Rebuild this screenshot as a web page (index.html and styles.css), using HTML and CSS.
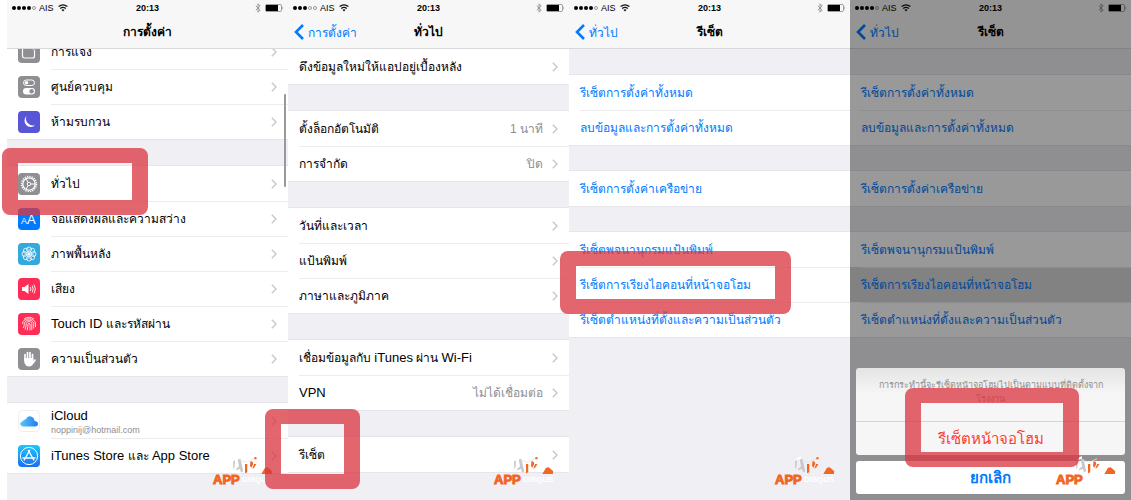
FILE: index.html
```
<!DOCTYPE html>
<html lang="th">
<head>
  <meta charset="UTF-8">
  <meta name="viewport" content="width=device-width, initial-scale=1.0">
  <title>รีเซ็ตหน้าจอโฮม</title>
  <link rel="stylesheet" href="styles.css">
</head>
<body>
  <!-- shared shapes -->
  <svg class="sprite" width="0" height="0" aria-hidden="true">
    <symbol id="wifi" viewBox="0 0 10 8">
      <path d="M0.6 2.6 Q5 -1 9.4 2.6 M2.2 4.5 Q5 2.3 7.8 4.5" fill="none" stroke="#111" stroke-width="1.3"/>
      <path d="M3.4 5.8 Q5 4.6 6.6 5.8 L5 7.6 Z" fill="#111"/>
    </symbol>
    <symbol id="bluetooth" viewBox="0 0 6 10">
      <path d="M0.8 2.8 L5.2 7 L3 9.2 V0.8 L5.2 3 L0.8 7.2" fill="none" stroke="#8e8e93" stroke-width="0.9"/>
    </symbol>
    <symbol id="battery" viewBox="0 0 19 8">
      <rect x="0.5" y="0.5" width="16" height="7" rx="1.3" fill="none" stroke="#777" stroke-width="0.7"/>
      <rect x="1" y="1" width="12" height="6" fill="#000"/>
      <path d="M17.5 2.6 Q19 4 17.5 5.4 Z" fill="#777"/>
    </symbol>
    <symbol id="next" viewBox="0 0 6 10">
      <path d="M0.8 0.8 L5 5 L0.8 9.2" fill="none" stroke="#c7c7cc" stroke-width="1.4"/>
    </symbol>
    <symbol id="back" viewBox="0 0 10 16">
      <path d="M9 1 L2 8 L9 15" fill="none" stroke="#007aff" stroke-width="2.6"/>
    </symbol>
    <symbol id="logo" viewBox="0 0 64 22">
      <path d="M19 7 L21 6 L20.500 13 L19 16 Z M24 5 L27 4 L30 18 L27.500 19 L26.500 15 L22 17 L22.500 15 L25.500 12.500 Z" fill="#c8c8c8"/>
      <path d="M20 4 L25 1 L25.500 4 L21 5.500 Z" fill="#fff"/>
      <path d="M26 6 L34 8 L44 3" fill="none" stroke="#e4e4e4" stroke-width="0.9"/>
      <path d="M32 10 L34.500 10 L34.500 19 L32 20 Z M38 7 Q41 6.500 41 10 L39 14 L37.500 12 Z M42 10 L44.500 10 L42 14 L40 15 Z" fill="#f26522"/>
      <circle cx="43.500" cy="3.500" r="1.300" fill="#f26522"/>
      <path d="M50 21 L54 14 L57 13.500 L62 18 L61.500 21 Z" fill="#f26522"/>
    </symbol>
  </svg>

  <main class="steps">
    <section class="phone">
      <header class="bar">
        <div class="status">
          <span class="signal"><i></i><i></i><i></i><i></i><i class="off"></i></span>
          <span class="carrier">AIS</span>
          <svg class="wifi"><use href="#wifi"/></svg>
          <span class="time">20:13</span>
          <svg class="bluetooth"><use href="#bluetooth"/></svg>
          <svg class="battery"><use href="#battery"/></svg>
        </div>
        <div class="nav"><h2>การตั้งค่า</h2></div>
      </header>
      <div class="list scrolled">
        <div class="group with-icons">
          <a class="row" href="#">
            <svg class="icon" viewBox="0 0 22 22"><rect width="22" height="22" rx="4" fill="#8e8e93"/><rect x="4.500" y="5" width="12" height="12" rx="2" fill="none" stroke="#fff" stroke-width="1.200"/><circle cx="15.500" cy="6" r="3" fill="#fff" stroke="#8e8e93"/></svg>
            <span class="label">การแจ้ง</span><svg class="next"><use href="#next"/></svg>
          </a>
          <a class="row" href="#">
            <svg class="icon" viewBox="0 0 22 22"><rect width="22" height="22" rx="4" fill="#8e8e93"/><rect x="5.500" y="4" width="11" height="5.500" rx="2.750" fill="none" stroke="#fff"/><circle cx="8.500" cy="6.750" r="1.800" fill="#fff"/><rect x="5" y="12" width="12" height="6.500" rx="3.250" fill="#fff"/><circle cx="13.600" cy="15.250" r="2.200" fill="#8e8e93"/></svg>
            <span class="label">ศูนย์ควบคุม</span><svg class="next"><use href="#next"/></svg>
          </a>
          <a class="row" href="#">
            <svg class="icon" viewBox="0 0 22 22"><rect width="22" height="22" rx="4" fill="#5856d6"/><path d="M8.500 5 A6.300 6.300 0 1 0 17.200 14.200 A7 7 0 0 1 8.500 5 Z" fill="#fff"/></svg>
            <span class="label">ห้ามรบกวน</span><svg class="next"><use href="#next"/></svg>
          </a>
        </div>
        <div class="group with-icons">
          <a class="row" href="#">
            <svg class="icon" viewBox="0 0 22 22"><rect width="22" height="22" rx="4" fill="#8e8e93"/><circle cx="11" cy="11" r="7.500" fill="none" stroke="#fff" stroke-width="1.400" stroke-dasharray="1.300 1.060"/><circle cx="11" cy="11" r="6.200" fill="none" stroke="#fff" stroke-width="1.300"/><path d="M11 11 H17 M11 11 L8 5.800 M11 11 L8 16.200" stroke="#fff"/><circle cx="11" cy="11" r="1.700" fill="#8e8e93" stroke="#fff" stroke-width="0.900"/></svg>
            <span class="label">ทั่วไป</span><svg class="next"><use href="#next"/></svg>
          </a>
          <a class="row" href="#">
            <svg class="icon" viewBox="0 0 22 22"><rect width="22" height="22" rx="4" fill="#007aff"/><text x="3" y="16" class="aa-small">A</text><text x="9" y="16" class="aa-big">A</text></svg>
            <span class="label">จอแสดงผลและความสว่าง</span><svg class="next"><use href="#next"/></svg>
          </a>
          <a class="row" href="#">
            <svg class="icon" viewBox="0 0 22 22"><rect width="22" height="22" rx="4" fill="#34aadc"/><g fill="none" stroke="#fff" stroke-width="0.800"><circle cx="11" cy="6.500" r="2.500"/><circle cx="14.200" cy="7.800" r="2.500"/><circle cx="15.500" cy="11" r="2.500"/><circle cx="14.200" cy="14.200" r="2.500"/><circle cx="11" cy="15.500" r="2.500"/><circle cx="7.800" cy="14.200" r="2.500"/><circle cx="6.500" cy="11" r="2.500"/><circle cx="7.800" cy="7.800" r="2.500"/></g><circle cx="11" cy="11" r="1.600" fill="#fff"/></svg>
            <span class="label">ภาพพื้นหลัง</span><svg class="next"><use href="#next"/></svg>
          </a>
          <a class="row" href="#">
            <svg class="icon" viewBox="0 0 22 22"><rect width="22" height="22" rx="4" fill="#ff2d55"/><path d="M4 9 H6.500 L10.500 6 V16 L6.500 13 H4 Z" fill="#fff"/><path d="M12.300 9 Q13.500 11 12.300 13 M14.200 7.700 Q16.200 11 14.200 14.300 M16 6.500 Q18.800 11 16 15.500" fill="none" stroke="#fff" stroke-width="0.900"/></svg>
            <span class="label">เสียง</span><svg class="next"><use href="#next"/></svg>
          </a>
          <a class="row" href="#">
            <svg class="icon" viewBox="0 0 22 22"><rect width="22" height="22" rx="4" fill="#ff2d55"/><g fill="none" stroke="#fff" stroke-width="0.800"><path d="M6 6 Q11 2.500 16 6"/><path d="M4.500 11 C4.500 4 17.500 4 17.500 11 V14"/><path d="M5.500 15 Q6.500 12 6.300 10.500 C7 6 15 6 15.700 10.500 V15.500"/><path d="M7 16.500 Q8.500 13 8.200 10.500 C8.500 8 13.500 8 13.800 10.500 V17"/><path d="M9 17.500 Q10 14.500 10 11 Q11 9.500 12 11 V17.500"/></g></svg>
            <span class="label"><span class="en">Touch ID</span> และรหัสผ่าน</span><svg class="next"><use href="#next"/></svg>
          </a>
          <a class="row" href="#">
            <svg class="icon" viewBox="0 0 22 22"><rect width="22" height="22" rx="4" fill="#8e8e93"/><path d="M7 12 V6.500 M9.500 11 V4.500 M12 11 V4.500 M14.500 12 V6.500" stroke="#fff" stroke-width="1.700" stroke-linecap="round"/><path d="M6.150 10 H15.350 V13 L17 11 Q18.500 11.500 17.500 13 L14 17.500 Q11 19.500 8 17.500 Q6 15.500 6.150 13 Z" fill="#fff"/></svg>
            <span class="label">ความเป็นส่วนตัว</span><svg class="next"><use href="#next"/></svg>
          </a>
        </div>
        <div class="group with-icons">
          <a class="row" href="#">
            <svg class="icon" viewBox="0 0 22 22"><defs><linearGradient id="cloud"><stop offset="0" stop-color="#5ac8fa"/><stop offset="1" stop-color="#1d7cf2"/></linearGradient></defs><rect x="0.500" y="0.500" width="21" height="21" rx="4" fill="#fff" stroke="#eee"/><path d="M5 16.500 Q2 16 2.200 13.600 Q2.500 11.300 5 11.200 Q5.500 9 7.800 9.500 Q9.500 5.500 13 6.500 Q16.500 7.500 16.500 11 Q20 11.300 20 14 Q19.800 16.500 17 16.500 Z" fill="url(#cloud)"/></svg>
            <span class="label two-line"><span class="en">iCloud</span><small>noppinij@hotmail.com</small></span><svg class="next"><use href="#next"/></svg>
          </a>
          <a class="row" href="#">
            <svg class="icon" viewBox="0 0 22 22"><defs><linearGradient id="store" x2="0" y2="1"><stop offset="0" stop-color="#1ac8fb"/><stop offset="1" stop-color="#1d6ff2"/></linearGradient></defs><rect width="22" height="22" rx="4" fill="url(#store)"/><circle cx="11" cy="11" r="8.600" fill="none" stroke="#fff"/><path d="M11.800 5 L6 15.500 M10.200 5 L16 15.500 M4.500 13 H17.500" stroke="#fff" stroke-width="1.300"/></svg>
            <span class="label"><span class="en">iTunes Store</span> และ <span class="en">App Store</span></span><svg class="next"><use href="#next"/></svg>
          </a>
        </div>
      </div>
      <i class="scrollbar"></i>
      <div class="logo"><svg><use href="#logo"/></svg><b>APP</b><span>DISQUS</span></div>
      <div class="mark mark-general"></div>
    </section>

    <section class="phone">
      <header class="bar">
        <div class="status">
          <span class="signal"><i></i><i></i><i></i><i class="off"></i><i class="off"></i></span>
          <span class="carrier">AIS</span>
          <svg class="wifi"><use href="#wifi"/></svg>
          <span class="time">20:13</span>
          <svg class="bluetooth"><use href="#bluetooth"/></svg>
          <svg class="battery"><use href="#battery"/></svg>
        </div>
        <div class="nav"><a class="back" href="#"><svg><use href="#back"/></svg>การตั้งค่า</a><h2>ทั่วไป</h2></div>
      </header>
      <div class="list">
        <div class="group">
          <a class="row" href="#"><span class="label">ดึงข้อมูลใหม่ให้แอปอยู่เบื้องหลัง</span><svg class="next"><use href="#next"/></svg></a>
        </div>
        <div class="group">
          <a class="row" href="#"><span class="label">ตั้งล็อกอัตโนมัติ</span><span class="value">1 นาที</span><svg class="next"><use href="#next"/></svg></a>
          <a class="row" href="#"><span class="label">การจำกัด</span><span class="value">ปิด</span><svg class="next"><use href="#next"/></svg></a>
        </div>
        <div class="group">
          <a class="row" href="#"><span class="label">วันที่และเวลา</span><svg class="next"><use href="#next"/></svg></a>
          <a class="row" href="#"><span class="label">แป้นพิมพ์</span><svg class="next"><use href="#next"/></svg></a>
          <a class="row" href="#"><span class="label">ภาษาและภูมิภาค</span><svg class="next"><use href="#next"/></svg></a>
        </div>
        <div class="group">
          <a class="row" href="#"><span class="label">เชื่อมข้อมูลกับ <span class="en">iTunes</span> ผ่าน <span class="en">Wi-Fi</span></span><svg class="next"><use href="#next"/></svg></a>
          <a class="row" href="#"><span class="label en">VPN</span><span class="value">ไม่ได้เชื่อมต่อ</span><svg class="next"><use href="#next"/></svg></a>
        </div>
        <div class="group">
          <a class="row" href="#"><span class="label">รีเซ็ต</span><svg class="next"><use href="#next"/></svg></a>
        </div>
      </div>
      <div class="logo"><svg><use href="#logo"/></svg><b>APP</b><span>DISQUS</span></div>
      <div class="mark mark-reset"></div>
    </section>

    <section class="phone">
      <header class="bar">
        <div class="status">
          <span class="signal"><i></i><i></i><i></i><i></i><i class="off"></i></span>
          <span class="carrier">AIS</span>
          <svg class="wifi"><use href="#wifi"/></svg>
          <span class="time">20:13</span>
          <svg class="bluetooth"><use href="#bluetooth"/></svg>
          <svg class="battery"><use href="#battery"/></svg>
        </div>
        <div class="nav"><a class="back" href="#"><svg><use href="#back"/></svg>ทั่วไป</a><h2>รีเซ็ต</h2></div>
      </header>
      <div class="list actions">
        <div class="group">
          <button class="row">รีเซ็ตการตั้งค่าทั้งหมด</button>
          <button class="row">ลบข้อมูลและการตั้งค่าทั้งหมด</button>
        </div>
        <div class="group">
          <button class="row">รีเซ็ตการตั้งค่าเครือข่าย</button>
        </div>
        <div class="group">
          <button class="row">รีเซ็ตพจนานุกรมแป้นพิมพ์</button>
          <button class="row">รีเซ็ตการเรียงไอคอนที่หน้าจอโฮม</button>
          <button class="row">รีเซ็ตตำแหน่งที่ตั้งและความเป็นส่วนตัว</button>
        </div>
      </div>
      <div class="logo"><svg><use href="#logo"/></svg><b>APP</b><span>DISQUS</span></div>
      <div class="mark mark-home"></div>
    </section>

    <section class="phone">
      <header class="bar">
        <div class="status">
          <span class="signal"><i></i><i></i><i></i><i></i><i class="off"></i></span>
          <span class="carrier">AIS</span>
          <svg class="wifi"><use href="#wifi"/></svg>
          <span class="time">20:13</span>
          <svg class="bluetooth"><use href="#bluetooth"/></svg>
          <svg class="battery"><use href="#battery"/></svg>
        </div>
        <div class="nav"><a class="back" href="#"><svg><use href="#back"/></svg>ทั่วไป</a><h2>รีเซ็ต</h2></div>
      </header>
      <div class="list actions">
        <div class="group">
          <button class="row">รีเซ็ตการตั้งค่าทั้งหมด</button>
          <button class="row">ลบข้อมูลและการตั้งค่าทั้งหมด</button>
        </div>
        <div class="group">
          <button class="row">รีเซ็ตการตั้งค่าเครือข่าย</button>
        </div>
        <div class="group">
          <button class="row">รีเซ็ตพจนานุกรมแป้นพิมพ์</button>
          <button class="row pressed">รีเซ็ตการเรียงไอคอนที่หน้าจอโฮม</button>
          <button class="row">รีเซ็ตตำแหน่งที่ตั้งและความเป็นส่วนตัว</button>
        </div>
      </div>
      <div class="dim">
        <div class="sheet">
          <p>การกระทำนี้จะรีเซ็ตหน้าจอโฮมไปเป็นตามแบบที่ติดตั้งจาก<wbr>โรงงาน</p>
          <button class="danger">รีเซ็ตหน้าจอโฮม</button>
        </div>
        <button class="cancel">ยกเลิก</button>
      </div>
      <div class="logo"><svg><use href="#logo"/></svg><b>APP</b><span>DISQUS</span></div>
      <div class="mark mark-confirm"></div>
    </section>
  </main>
</body>
</html>
```

FILE: styles.css
```
* {
  box-sizing: border-box;
}

body {
  margin: 0;
  background: #fff;
  font-family: "Liberation Sans", Arial, sans-serif;
  font-size: 12px;
  color: #000;
}

a {
  color: inherit;
  text-decoration: none;
}

button {
  border: none;
  font-family: inherit;
  cursor: pointer;
}

.sprite {
  position: absolute;
}

.steps {
  display: flex;
  min-height: 100vh;
  padding-left: 7px;
}

.phone {
  flex: 1;
  min-width: 0;
  position: relative;
  background: #efeff4;
}

/* status + navigation */
.bar {
  position: relative;
  z-index: 1;
  height: 49px;
  background: #f7f7f7;
  border-bottom: 1px solid #d9d9dc;
}

.status {
  display: flex;
  align-items: center;
  height: 16px;
  padding: 0 4px 0 5px;
  position: relative;
  font-size: 9px;
}

.signal {
  display: flex;
  gap: 1px;
}

.signal i {
  width: 4px;
  height: 4px;
  border-radius: 50%;
  background: #000;
}

.signal .off {
  background: none;
  border: 1px solid #999;
}

.carrier {
  margin: 0 4px 0 3px;
}

.wifi {
  width: 10px;
  height: 8px;
}

.time {
  position: absolute;
  left: 0;
  right: 0;
  text-align: center;
  font-weight: bold;
}

.bluetooth {
  width: 6px;
  height: 10px;
  margin-left: auto;
}

.battery {
  width: 19px;
  height: 8px;
  margin-left: 4px;
}

.nav {
  display: grid;
  grid-template-columns: 1fr auto 1fr;
  align-items: center;
  height: 32px;
  padding: 0 6px;
}

.nav h2 {
  grid-column: 2;
  margin: 0;
  font-size: 12px;
  line-height: 32px;
}

.back {
  display: flex;
  align-items: center;
  gap: 4px;
  font-size: 12px;
  color: #007aff;
}

.back svg {
  width: 10px;
  height: 16px;
}

/* lists */
.list {
  display: flex;
  flex-direction: column;
  gap: 27px;
}

.scrolled {
  margin-top: -15px;
}

.actions {
  gap: 26px;
  padding-top: 26px;
}

.group {
  background: #fff;
  box-shadow: 0 0 0 1px #e6e6ea;
  clip-path: inset(-1px 0);
}

.row {
  display: flex;
  align-items: center;
  width: 100%;
  height: 35px;
  padding: 0 11px;
  position: relative;
  background: none;
  font-size: 12px;
  line-height: 20px;
  white-space: nowrap;
}

.row + .row::before {
  content: "";
  position: absolute;
  top: 0;
  left: 11px;
  right: 0;
  border-top: 1px solid #ececef;
}

.with-icons .row + .row::before {
  left: 44px;
}

.icon {
  width: 22px;
  height: 22px;
  margin-right: 11px;
}

.label {
  flex: 1;
}

/* latin words sit a size up beside the thai */
.en {
  font-size: 13px;
}

.two-line {
  display: flex;
  flex-direction: column;
  padding-top: 4px;
  line-height: 15px;
}

.two-line small {
  font-size: 9px;
  color: #8e8e93;
}

.value {
  margin-right: 9px;
  color: #8e8e93;
}

.next {
  width: 6px;
  height: 10px;
}

.actions .row {
  color: #007aff;
}

.pressed {
  background: #d9d9d9;
}

.scrollbar {
  position: absolute;
  top: 94px;
  right: 2px;
  width: 2px;
  height: 93px;
  border-radius: 1px;
  background: #999;
}

/* action sheet */
.dim {
  position: absolute;
  inset: 0;
  z-index: 2;
  display: flex;
  flex-direction: column;
  justify-content: flex-end;
  gap: 6px;
  padding: 6px;
  background: rgba(0, 0, 0, 0.4);
}

.sheet {
  border-radius: 3px;
  background: linear-gradient(#e4e4e4, #f6f6f6 30%, #f6f6f6);
  text-align: center;
  overflow: hidden;
}

.sheet p {
  height: 53px;
  margin: 0;
  padding: 10px 18px 0;
  font-size: 9px;
  line-height: 14px;
  color: #8f8f8f;
}

.danger {
  display: block;
  width: 100%;
  height: 34px;
  border-top: 1px solid #d5d5d5;
  background: none;
  font-size: 15px;
  color: #ff3b30;
}

.cancel {
  height: 33px;
  border-radius: 3px;
  background: #fff;
  font-size: 15px;
  font-weight: bold;
  color: #007aff;
}

/* watermark */
.logo {
  position: absolute;
  top: 455px;
  right: 11px;
  z-index: 3;
  display: flex;
  flex-wrap: wrap;
  align-items: center;
  gap: 0 2px;
  width: 64px;
  line-height: 10px;
  white-space: nowrap;
}

.logo svg {
  width: 64px;
  height: 20px;
}

.logo b {
  font-size: 13px;
  color: #f26522;
  -webkit-text-stroke: 1px #f26522;
}

.logo span {
  font-size: 8px;
  font-weight: bold;
  color: #fff;
}

.aa-small {
  font-size: 9px;
  fill: #fff;
}

.aa-big {
  font-size: 13px;
  fill: #fff;
}

/* red frames over the item to tap */
.mark {
  position: absolute;
  z-index: 4;
  border: 15px solid rgba(219, 54, 66, 0.77);
  border-width: 15px 16px;
  border-radius: 8px;
}

.mark-general {
  top: 148px;
  left: -5px;
  width: 146px;
  height: 67px;
}

.mark-reset {
  top: 409px;
  left: -23px;
  width: 95px;
  height: 80px;
}

.mark-home {
  top: 251px;
  left: -9px;
  width: 231px;
  height: 63px;
}

.mark-confirm {
  top: 388px;
  left: 55px;
  width: 174px;
  height: 79px;
}
```
